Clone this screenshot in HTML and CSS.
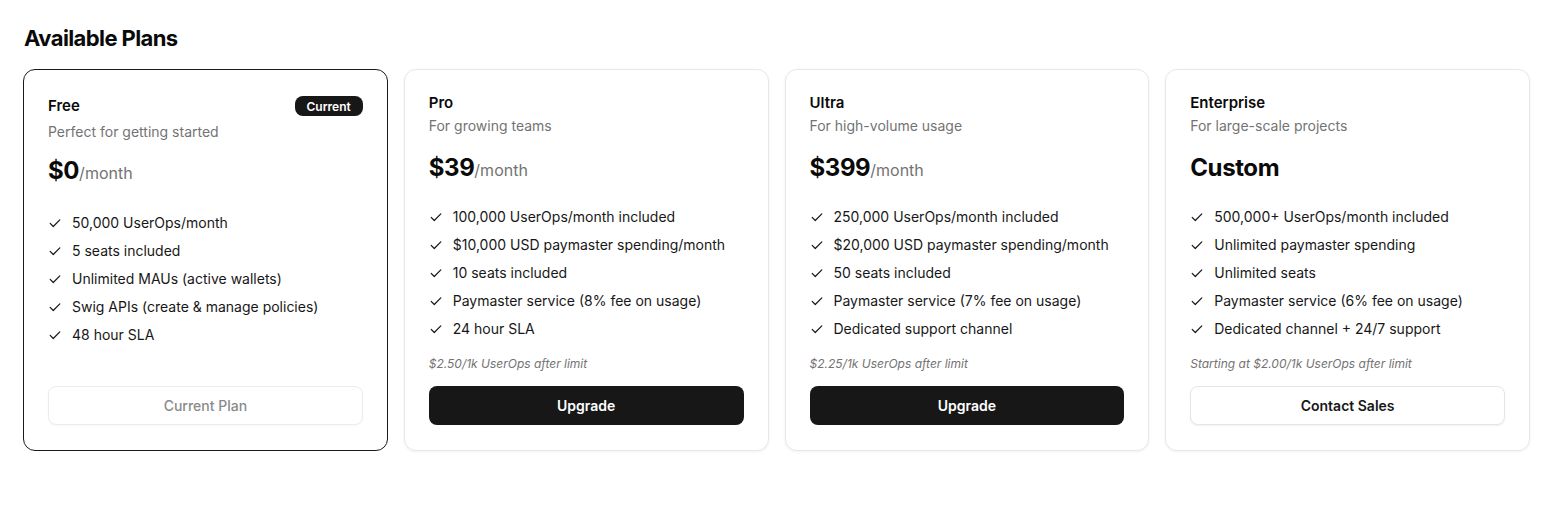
FILE: index.html
```html
<!DOCTYPE html>
<html lang="en">
<head>
<meta charset="utf-8">
<title>Available Plans</title>
<link rel="stylesheet" href="styles.css">
</head>
<body>
<main class="page">
  <h1 class="page-title">Available Plans</h1>
  <div class="plans">
    <section class="plan plan--current">
      <div class="plan-head">
        <h2 class="plan-name">Free</h2>
        <span class="badge">Current</span>
      </div>
      <p class="plan-desc">Perfect for getting started</p>
      <div class="plan-price"><span class="amount">$0</span><span class="period">/month</span></div>
      <ul class="features">
        <li><svg class="check" viewBox="0 0 16 16"><path d="M2.5 8.5l3.5 3.5 7.5-7.5"/></svg>50,000 UserOps/month</li>
        <li><svg class="check" viewBox="0 0 16 16"><path d="M2.5 8.5l3.5 3.5 7.5-7.5"/></svg>5 seats included</li>
        <li><svg class="check" viewBox="0 0 16 16"><path d="M2.5 8.5l3.5 3.5 7.5-7.5"/></svg>Unlimited MAUs (active wallets)</li>
        <li><svg class="check" viewBox="0 0 16 16"><path d="M2.5 8.5l3.5 3.5 7.5-7.5"/></svg>Swig APIs (create &amp; manage policies)</li>
        <li><svg class="check" viewBox="0 0 16 16"><path d="M2.5 8.5l3.5 3.5 7.5-7.5"/></svg>48 hour SLA</li>
      </ul>
      <div class="plan-foot">
        <button class="btn btn--disabled" disabled>Current Plan</button>
      </div>
    </section>

    <section class="plan">
      <div class="plan-head">
        <h2 class="plan-name">Pro</h2>
      </div>
      <p class="plan-desc">For growing teams</p>
      <div class="plan-price"><span class="amount">$39</span><span class="period">/month</span></div>
      <ul class="features">
        <li><svg class="check" viewBox="0 0 16 16"><path d="M2.5 8.5l3.5 3.5 7.5-7.5"/></svg>100,000 UserOps/month included</li>
        <li><svg class="check" viewBox="0 0 16 16"><path d="M2.5 8.5l3.5 3.5 7.5-7.5"/></svg>$10,000 USD paymaster spending/month</li>
        <li><svg class="check" viewBox="0 0 16 16"><path d="M2.5 8.5l3.5 3.5 7.5-7.5"/></svg>10 seats included</li>
        <li><svg class="check" viewBox="0 0 16 16"><path d="M2.5 8.5l3.5 3.5 7.5-7.5"/></svg>Paymaster service (8% fee on usage)</li>
        <li><svg class="check" viewBox="0 0 16 16"><path d="M2.5 8.5l3.5 3.5 7.5-7.5"/></svg>24 hour SLA</li>
      </ul>
      <div class="plan-foot">
        <p class="overage">$2.50/1k UserOps after limit</p>
        <button class="btn btn--primary">Upgrade</button>
      </div>
    </section>

    <section class="plan">
      <div class="plan-head">
        <h2 class="plan-name">Ultra</h2>
      </div>
      <p class="plan-desc">For high-volume usage</p>
      <div class="plan-price"><span class="amount">$399</span><span class="period">/month</span></div>
      <ul class="features">
        <li><svg class="check" viewBox="0 0 16 16"><path d="M2.5 8.5l3.5 3.5 7.5-7.5"/></svg>250,000 UserOps/month included</li>
        <li><svg class="check" viewBox="0 0 16 16"><path d="M2.5 8.5l3.5 3.5 7.5-7.5"/></svg>$20,000 USD paymaster spending/month</li>
        <li><svg class="check" viewBox="0 0 16 16"><path d="M2.5 8.5l3.5 3.5 7.5-7.5"/></svg>50 seats included</li>
        <li><svg class="check" viewBox="0 0 16 16"><path d="M2.5 8.5l3.5 3.5 7.5-7.5"/></svg>Paymaster service (7% fee on usage)</li>
        <li><svg class="check" viewBox="0 0 16 16"><path d="M2.5 8.5l3.5 3.5 7.5-7.5"/></svg>Dedicated support channel</li>
      </ul>
      <div class="plan-foot">
        <p class="overage">$2.25/1k UserOps after limit</p>
        <button class="btn btn--primary">Upgrade</button>
      </div>
    </section>

    <section class="plan">
      <div class="plan-head">
        <h2 class="plan-name">Enterprise</h2>
      </div>
      <p class="plan-desc">For large-scale projects</p>
      <div class="plan-price"><span class="amount">Custom</span></div>
      <ul class="features">
        <li><svg class="check" viewBox="0 0 16 16"><path d="M2.5 8.5l3.5 3.5 7.5-7.5"/></svg>500,000+ UserOps/month included</li>
        <li><svg class="check" viewBox="0 0 16 16"><path d="M2.5 8.5l3.5 3.5 7.5-7.5"/></svg>Unlimited paymaster spending</li>
        <li><svg class="check" viewBox="0 0 16 16"><path d="M2.5 8.5l3.5 3.5 7.5-7.5"/></svg>Unlimited seats</li>
        <li><svg class="check" viewBox="0 0 16 16"><path d="M2.5 8.5l3.5 3.5 7.5-7.5"/></svg>Paymaster service (6% fee on usage)</li>
        <li><svg class="check" viewBox="0 0 16 16"><path d="M2.5 8.5l3.5 3.5 7.5-7.5"/></svg>Dedicated channel + 24/7 support</li>
      </ul>
      <div class="plan-foot">
        <p class="overage">Starting at $2.00/1k UserOps after limit</p>
        <button class="btn btn--outline">Contact Sales</button>
      </div>
    </section>
  </div>
</main>
</body>
</html>
```

FILE: styles.css
```css
* {
  box-sizing: border-box;
}

html, body {
  margin: 0;
  background: #ffffff;
}

body {
  font-family: Inter, "Noto Sans", "Liberation Sans", sans-serif;
  color: #171717;
  -webkit-font-smoothing: antialiased;
}

.page {
  padding: 24px 13px 24px 23px;
}

.page-title {
  margin: 0 0 17px 1px;
  font-size: 22px;
  line-height: 28px;
  font-weight: 700;
  letter-spacing: -0.6px;
  color: #0a0a0a;
}

.plans {
  display: grid;
  grid-template-columns: repeat(4, minmax(0, 1fr));
  gap: 16px;
}

.plan {
  display: flex;
  flex-direction: column;
  min-height: 382px;
  padding: 23px 24px 25px;
  border: 1px solid #e8e8e8;
  border-radius: 12px;
  background: #ffffff;
  box-shadow: 0 1px 3px rgba(0, 0, 0, 0.06);
}

.plan--current {
  border-color: #1a1a1a;
  box-shadow: none;
}

.plan-head {
  display: flex;
  align-items: center;
  justify-content: space-between;
  min-height: 20px;
}

.plan--current .plan-head {
  min-height: 26px;
}

.plan-name {
  margin: 0;
  font-size: 15px;
  line-height: 20px;
  font-weight: 600;
  color: #0a0a0a;
}

.badge {
  display: inline-flex;
  align-items: center;
  height: 20px;
  padding: 0 12px;
  border-radius: 8px;
  background: #171717;
  color: #ffffff;
  font-size: 12px;
  font-weight: 600;
}

.plan-desc {
  margin: 3px 0 0;
  font-size: 14px;
  line-height: 20px;
  color: #737373;
}

.plan-price {
  margin-top: 16px;
  display: flex;
  align-items: baseline;
  height: 32px;
  line-height: 32px;
}

.plan--current .plan-price {
  margin-top: 13px;
}

.amount {
  font-size: 24px;
  font-weight: 700;
  letter-spacing: -0.4px;
  color: #0a0a0a;
}

.period {
  font-size: 16px;
  color: #737373;
}

.features {
  list-style: none;
  margin: 23px 0 0;
  padding: 0;
  display: flex;
  flex-direction: column;
  gap: 8px;
}

.plan--current .features {
  margin-top: 26px;
}

.features li {
  display: flex;
  align-items: center;
  gap: 10px;
  font-size: 14px;
  line-height: 20px;
  color: #171717;
}

.check {
  width: 14px;
  height: 14px;
  flex: none;
  fill: none;
  stroke: #171717;
  stroke-width: 1.4;
  stroke-linecap: round;
  stroke-linejoin: round;
}

.plan-foot {
  margin-top: auto;
}

.overage {
  margin: 0 0 14px;
  font-size: 12px;
  line-height: 16px;
  font-style: italic;
  color: #737373;
}

.btn {
  display: block;
  width: 100%;
  height: 39px;
  border-radius: 8px;
  font-family: inherit;
  font-size: 14px;
  font-weight: 600;
  cursor: pointer;
}

.btn--primary {
  border: none;
  background: #171717;
  color: #ffffff;
}

.btn--outline {
  border: 1px solid #e5e5e5;
  background: #ffffff;
  color: #171717;
  box-shadow: 0 1px 2px rgba(0, 0, 0, 0.06);
}

.btn--disabled {
  border: 1px solid #ececec;
  background: #ffffff;
  color: #8a8a8a;
  font-weight: 500;
  cursor: default;
  box-shadow: 0 1px 2px rgba(0, 0, 0, 0.03);
}
```
